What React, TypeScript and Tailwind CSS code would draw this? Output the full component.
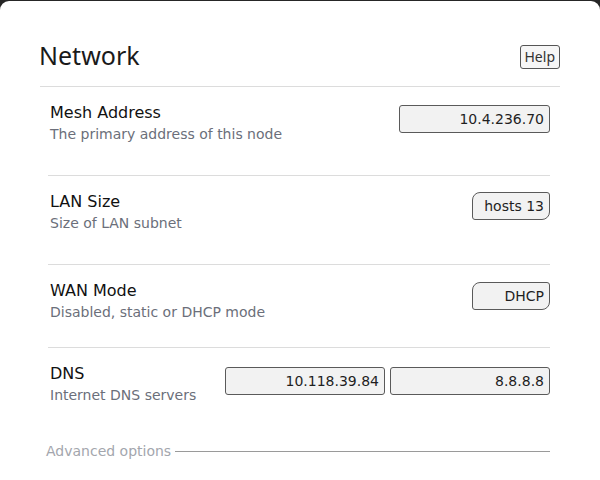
import React from "react";

const dv = { fontFamily: '"DejaVu Sans", sans-serif' };

function Field({ value, w }: { value: string; w: string }) {
  return (
    <div
      className={`${w} h-[28px] bg-[#f2f2f2] border border-[#5a5a5a] rounded-[3px] flex items-center justify-end pr-[5px] text-[14px] text-[#1f1f1f]`}
      style={dv}
    >
      {value}
    </div>
  );
}

function Select({ value }: { value: string }) {
  return (
    <div
      className="w-[78px] h-[28px] bg-[#f2f2f2] border border-[#5a5a5a] rounded-tl-[8px] rounded-br-[8px] rounded-tr-[3px] rounded-bl-[3px] flex items-center justify-end pr-[5px] text-[14px] text-[#1f1f1f]"
      style={dv}
    >
      {value}
    </div>
  );
}

function Row({
  title,
  desc,
  children,
  className,
  ctl,
}: {
  title: string;
  desc: string;
  children: React.ReactNode;
  className: string;
  ctl: string;
}) {
  return (
    <div className={`flex justify-between items-start pl-[2px] ${className}`}>
      <div className="flex flex-col" style={dv}>
        <span className="text-[16px] leading-[24px] text-[#111]">{title}</span>
        <span className="text-[14px] leading-[18px] text-[#6b6f7a]">{desc}</span>
      </div>
      <div className={`flex gap-[5px] ${ctl}`}>{children}</div>
    </div>
  );
}

export default function App() {
  return (
    <div className="w-[600px] h-[480px] bg-[#262626] pt-[1px]">
      <div className="h-[479px] bg-white rounded-t-[9px] px-[40px] pt-[38px]">
        <div className="flex justify-between items-center h-[32px]">
          <h1
            className="text-[25px] text-[#1a1a1a] leading-[32px] -ml-[1px]"
            style={{ fontFamily: '"Noto Sans", sans-serif' }}
          >
            Network
          </h1>
          <button
            className="h-[24px] px-[4px] mt-[3px] border border-[#555] rounded-[3px] bg-[#f6f6f6] text-[14px] text-[#333] leading-none"
            style={{ fontFamily: '"Noto Sans", sans-serif' }}
          >
            Help
          </button>
        </div>
        <div className="mt-[15px] border-t border-[#dcdcdc]" />
        <div className="ml-[8px] mr-[10px]">
          <Row
            title="Mesh Address"
            desc="The primary address of this node"
            className="pt-[14px] h-[88px]"
            ctl="mt-[4px]"
          >
            <Field value="10.4.236.70" w="w-[151px]" />
          </Row>
          <div className="border-t border-[#dcdcdc]" />
          <Row
            title="LAN Size"
            desc="Size of LAN subnet"
            className="pt-[14px] h-[88px]"
            ctl="mt-[2px]"
          >
            <Select value="hosts 13" />
          </Row>
          <div className="border-t border-[#dcdcdc]" />
          <Row
            title="WAN Mode"
            desc="Disabled, static or DHCP mode"
            className="pt-[14px] h-[82px]"
            ctl="mt-[3px]"
          >
            <Select value="DHCP" />
          </Row>
          <div className="border-t border-[#dcdcdc]" />
          <Row
            title="DNS"
            desc="Internet DNS servers"
            className="pt-[14px] h-[82px]"
            ctl="mt-[5px]"
          >
            <Field value="10.118.39.84" w="w-[160px]" />
            <Field value="8.8.8.8" w="w-[160px]" />
          </Row>
        </div>
        <div className="flex items-center ml-[6px] mr-[10px] mt-[11px]">
          <span className="text-[14px] text-[#a3a6ad] leading-[20px]" style={dv}>
            Advanced options
          </span>
          <div className="flex-1 ml-[4px] border-t border-[#9a9a9a]" />
        </div>
      </div>
    </div>
  );
}
